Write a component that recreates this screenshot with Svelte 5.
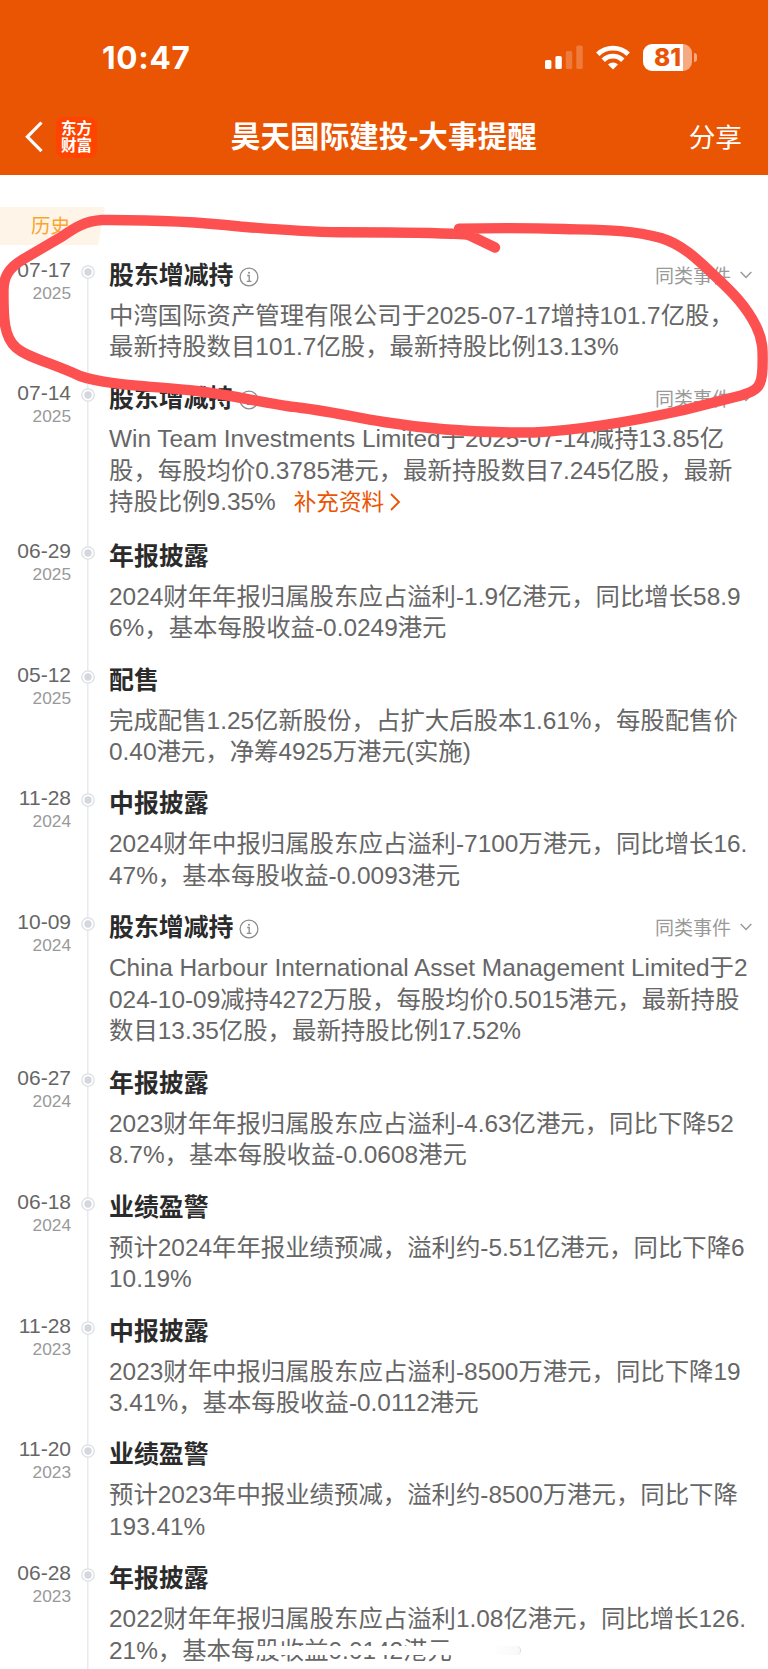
<script lang="ts">
  interface StockEvent {
    date: string;
    year: string;
    title: string;
    lines: string[];
    similar?: boolean;
    link?: string;
  }

  const events: StockEvent[] = [
    {
      date: '07-17',
      year: '2025',
      title: '股东增减持',
      lines: ['中湾国际资产管理有限公司于2025-07-17增持101.7亿股，', '最新持股数目101.7亿股，最新持股比例13.13%'],
      similar: true,
    },
    {
      date: '07-14',
      year: '2025',
      title: '股东增减持',
      lines: [
        'Win Team Investments Limited于2025-07-14减持13.85亿',
        '股，每股均价0.3785港元，最新持股数目7.245亿股，最新',
        '持股比例9.35%',
      ],
      similar: true,
      link: '补充资料',
    },
    {
      date: '06-29',
      year: '2025',
      title: '年报披露',
      lines: ['2024财年年报归属股东应占溢利-1.9亿港元，同比增长58.9', '6%，基本每股收益-0.0249港元'],
    },
    {
      date: '05-12',
      year: '2025',
      title: '配售',
      lines: ['完成配售1.25亿新股份，占扩大后股本1.61%，每股配售价', '0.40港元，净筹4925万港元(实施)'],
    },
    {
      date: '11-28',
      year: '2024',
      title: '中报披露',
      lines: ['2024财年中报归属股东应占溢利-7100万港元，同比增长16.', '47%，基本每股收益-0.0093港元'],
    },
    {
      date: '10-09',
      year: '2024',
      title: '股东增减持',
      lines: [
        'China Harbour International Asset Management Limited于2',
        '024-10-09减持4272万股，每股均价0.5015港元，最新持股',
        '数目13.35亿股，最新持股比例17.52%',
      ],
      similar: true,
    },
    {
      date: '06-27',
      year: '2024',
      title: '年报披露',
      lines: ['2023财年年报归属股东应占溢利-4.63亿港元，同比下降52', '8.7%，基本每股收益-0.0608港元'],
    },
    {
      date: '06-18',
      year: '2024',
      title: '业绩盈警',
      lines: ['预计2024年年报业绩预减，溢利约-5.51亿港元，同比下降6', '10.19%'],
    },
    {
      date: '11-28',
      year: '2023',
      title: '中报披露',
      lines: ['2023财年中报归属股东应占溢利-8500万港元，同比下降19', '3.41%，基本每股收益-0.0112港元'],
    },
    {
      date: '11-20',
      year: '2023',
      title: '业绩盈警',
      lines: ['预计2023年中报业绩预减，溢利约-8500万港元，同比下降', '193.41%'],
    },
    {
      date: '06-28',
      year: '2023',
      title: '年报披露',
      lines: ['2022财年年报归属股东应占溢利1.08亿港元，同比增长126.', '21%，基本每股收益0.0142港元'],
    },
  ];
</script>

<div class="page">
  <header>
    <div class="status">
      <span class="time">10:47</span>
      <div class="status-icons">
        <svg class="signal" width="38" height="24" viewBox="0 0 38 24" fill="#fff">
          <rect x="0" y="15" width="6.4" height="9" rx="1.6" />
          <rect x="10.4" y="11" width="6.4" height="13" rx="1.6" />
          <rect x="20.8" y="6" width="6.4" height="18" rx="1.6" opacity="0.22" />
          <rect x="31.3" y="0.4" width="6.4" height="23.6" rx="1.6" opacity="0.22" />
        </svg>
        <svg class="wifi" width="34" height="25" viewBox="0 0 34 25">
          <g fill="none" stroke="#fff" stroke-width="4.8">
            <path d="M1.8 9.2a21.8 21.8 0 0 1 30.4 0" />
            <path d="M7.2 15.200a13.8 13.8 0 0 1 19.6 0" />
          </g>
          <path d="M17 24.6l-5-5.1a7.2 7.2 0 0 1 10 0z" fill="#fff" />
        </svg>
        <div class="battery">81</div>
        <div class="battery-cap"></div>
      </div>
    </div>
    <nav>
      <svg class="back" width="18" height="32" viewBox="0 0 18 32" fill="none" stroke="#fff" stroke-width="3.2">
        <path d="M16.5 1.5L2.4 15.8l14.1 14.4" />
      </svg>
      <div class="logo"><span>东方</span><span>财富</span></div>
      <h1>昊天国际建投-大事提醒</h1>
      <span class="share">分享</span>
    </nav>
  </header>

  <div class="tag">历史</div>

  <main>
    {#each events as event}
      <section class="event">
        <div class="when">
          <span class="date">{event.date}</span>
          <span class="year">{event.year}</span>
        </div>
        <div class="rail">
          <svg class="dot" width="14" height="14" viewBox="0 0 14 14">
            <circle cx="7" cy="7" r="6.2" fill="#fff" stroke="#dcdee4" stroke-width="1.3" />
            <circle cx="7" cy="7" r="3.7" fill="#d4d7de" />
          </svg>
        </div>
        <div class="content">
          <div class="title-row">
            <h2>{event.title}</h2>
            {#if event.similar}
              <svg class="info" width="20" height="20" viewBox="0 0 20 20" fill="none" stroke="#8c8c8c" stroke-width="1.3">
                <circle cx="10" cy="10" r="8.9" />
                <path d="M8.200 8.5h2v5.800M7.800 14.400h4.600" />
                <circle cx="10" cy="5.8" r="1" fill="#8c8c8c" stroke="none" />
              </svg>
              <span class="similar">同类事件</span>
              <svg class="chevron" width="12" height="8" viewBox="0 0 12 8" fill="none" stroke="#999" stroke-width="1.5">
                <path d="M0.7 0.9L6 6.4l5.3-5.5" />
              </svg>
            {/if}
          </div>
          {#each event.lines as line, i}
            <p>
              {line}{#if event.link && i === event.lines.length - 1}<a class="link" href="#more">{event.link}<svg width="11" height="18" viewBox="0 0 11 18" fill="none" stroke="#ea5504" stroke-width="1.9"><path d="M1 1l8 8-8 8" /></svg></a>{/if}
            </p>
          {/each}
        </div>
      </section>
    {/each}
  </main>

  <div class="strip"></div>
  <div class="pill"></div>

  <!-- hand-drawn marker -->
  <svg class="marker" width="768" height="460" viewBox="0 0 768 460">
    <path
      d="M495 247.500L470 235.500C467 234 462 234 452 233.800C420 232.600 384 232.300 340 232.300C300 231.700 270 229 240 226.500C200 222 160 219.700 102 220C85 221 74 228 62 236.500L22 260C9 268 3 277 3.500 292C3.300 318 4 337 16 347.500C26 357 52 363 80 376C105 385 150 386 197 391C230 395 255 401 290 406.500C325 410 352 417 384 422C430 429.500 480 433 534 432.500C580 430 625 423 684 410L741 395.500C757 391 762 387 762.500 368C763 350 763 340 756 326C746 306 733 293 717 278C700 262 684 245 661 238C630 229.500 600 230 564 229C530 228 490 228 459 228.700"
    />
  </svg>
</div>

<style>
  :global(body) {
    background: #fff;
  }

  .page {
    position: relative;
    width: 768px;
    height: 1669px;
    overflow: hidden;
    background: #fff;
    font-family: "Liberation Sans", "Noto Sans CJK SC", sans-serif;
  }

  header {
    height: 175px;
    background: #ea5504;
    color: #fff;
  }

  .status {
    display: flex;
    align-items: center;
    justify-content: space-between;
    height: 114px;
    padding: 0 71px 0 102px;
    box-sizing: border-box;
  }

  .time {
    font-family: Inter, sans-serif;
    font-size: 31.5px;
    font-weight: 700;
    letter-spacing: 0.7px;
  }

  .status-icons {
    display: flex;
    align-items: center;
  }

  .wifi {
    margin: 0 13px;
  }

  .battery {
    width: 49px;
    height: 27px;
    border-radius: 9px;
    background: linear-gradient(90deg, #fff 40px, #f5aa82 40px);
    color: #ea5504;
    font: 800 24.5px/27px Inter, sans-serif;
    text-align: center;
  }

  .battery-cap {
    width: 3px;
    height: 9px;
    margin-left: 2px;
    border-radius: 0 4px 4px 0;
    background: #f5aa82;
  }

  nav {
    display: flex;
    align-items: center;
    height: 46px;
    padding: 0 26px 0 25px;
  }

  .logo {
    display: flex;
    flex-direction: column;
    justify-content: center;
    width: 41px;
    height: 41px;
    margin-left: 13px;
    border-radius: 8px;
    background: #ff4400;
    font-size: 15.5px;
    font-weight: 700;
    line-height: 17.5px;
    text-align: center;
  }

  h1 {
    flex: 1;
    margin: 0;
    padding-right: 18px;
    font-size: 29.5px;
    font-weight: 700;
    letter-spacing: 0.1px;
    line-height: 46px;
    text-align: center;
  }

  .share {
    margin-top: -3px;
    font-size: 26.7px;
  }

  .tag {
    width: 105px;
    height: 38px;
    margin-top: 32px;
    padding-left: 31px;
    box-sizing: border-box;
    clip-path: polygon(0 0, 100% 0, 98px 100%, 0 100%);
    background: #fff4e8;
    color: #faa42c;
    font-size: 19.5px;
    line-height: 38px;
  }

  main {
    padding-top: 12.5px;
  }

  .event {
    display: flex;
    height: 123.9px;
  }

  .event:nth-child(2) {
    height: 157.3px;
  }

  .event:nth-child(6) {
    height: 155.4px;
  }

  .when {
    display: flex;
    flex-direction: column;
    width: 71px;
    text-align: right;
  }

  .date {
    color: #666;
    font-size: 21px;
    line-height: 24px;
  }

  .year {
    color: #999;
    font-size: 17.3px;
    line-height: 22px;
  }

  .rail {
    display: flex;
    justify-content: center;
    width: 33px;
    background: linear-gradient(#e9eaee, #e9eaee) 50% 0 / 1.5px 100% no-repeat;
  }

  .event:first-child .rail {
    background-position: 50% 14px;
  }

  .dot {
    margin-top: 7px;
  }

  .content {
    flex: 1;
    padding-left: 5px;
  }

  .title-row {
    display: flex;
    align-items: center;
    height: 35px;
    padding-right: 16px;
  }

  h2 {
    margin: 0;
    color: #2b2b2b;
    font-size: 24.9px;
    font-weight: 700;
    line-height: 35px;
  }

  .info {
    margin: 3px 0 0 6px;
  }

  .similar {
    margin: -2px 0 0 auto;
    color: #999;
    font-size: 19px;
  }

  .chevron {
    margin: -1px 0 0 9px;
  }

  p {
    height: 31.4px;
    margin: 0;
    color: #666;
    font-size: 24.4px;
    line-height: 31.4px;
    white-space: nowrap;
  }

  .title-row + p {
    margin-top: 7px;
  }

  .link {
    margin-left: 18px;
    color: #ea5504;
    font-size: 22.6px;
    text-decoration: none;
  }

  .link svg {
    margin-left: 6px;
    vertical-align: -1px;
  }

  .strip {
    position: absolute;
    top: 1646px;
    left: 252px;
    width: 280px;
    height: 9px;
    background: #fff;
  }

  .pill {
    position: absolute;
    top: 1646px;
    left: 492px;
    width: 29px;
    height: 9px;
    box-sizing: border-box;
    border-right: 1px solid #d9d9d9;
    border-radius: 5px;
    background: linear-gradient(90deg, #fff, #f8f8f8);
  }

  .marker {
    position: absolute;
    top: 0;
    left: 0;
  }

  .marker path {
    fill: none;
    stroke: #fd5050;
    stroke-width: 10.4px;
    stroke-linecap: round;
    stroke-linejoin: round;
  }
</style>
